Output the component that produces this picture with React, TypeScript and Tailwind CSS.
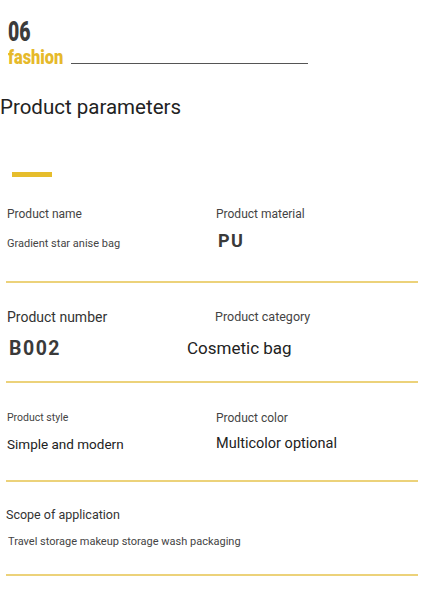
const font = { fontFamily: 'Roboto, "Noto Sans", sans-serif' };
const narrow = { fontFamily: 'Roboto, "DejaVu Sans", sans-serif' };

function Row({ className, children }: { className: string; children: React.ReactNode }) {
  return (
    <div className={`mx-[6px] border-b-2 border-[#ecd27a] ${className}`}>{children}</div>
  );
}

export default function App() {
  return (
    <div className="w-[424px] h-[600px] bg-white text-[#333] overflow-hidden" style={font}>
      <div className="pl-2 pt-[20px]">
        <div
          className="inline-block origin-left scale-x-[0.72] text-[27px] leading-[24px] font-black text-[#3b3b3b]"
          style={narrow}
        >
          06
        </div>
        <div className="mt-px flex items-end">
          <span
            className="inline-block w-[63px] origin-left scale-x-[0.82] text-[20px] leading-[17px] font-black text-[#e6b92a] whitespace-nowrap"
            style={narrow}
          >
            fashion
          </span>
          <div className="mb-[2px] h-px w-[237px] bg-[#555]" />
        </div>
      </div>

      <h1 className="mt-[29px] text-[20.5px] leading-[24px] font-normal text-[#222]">Product parameters</h1>

      <div className="ml-3 mt-[53px] h-[5px] w-10 bg-[#e6bd2c]" />

      <Row className="h-[106px] pt-[29px] grid grid-cols-[209px_1fr]">
        <div className="pl-px">
          <div className="text-[12px] leading-4 text-[#444]">Product name</div>
          <div className="mt-[14px] text-[11px] leading-4 text-[#444]">Gradient star anise bag</div>
        </div>
        <div className="pl-px">
          <div className="text-[12px] leading-4 text-[#444]">Product material</div>
          <div className="mt-[9px] pl-[2px] text-[18px] leading-5 font-bold tracking-[1.5px] text-[#3a3a3a]">PU</div>
        </div>
      </Row>

      <Row className="h-[100px] pt-[24px] grid grid-cols-[181px_1fr]">
        <div className="pl-px">
          <div className="text-[14px] leading-5 text-[#333]">Product number</div>
          <div className="mt-[10px] pl-[2px] text-[19.5px] leading-6 font-bold tracking-[1.5px] text-[#3a3a3a]">B002</div>
        </div>
        <div>
          <div className="pl-7 text-[12.5px] leading-5 text-[#444]">Product category</div>
          <div className="mt-[9px] text-[17px] leading-6 text-[#222]">Cosmetic bag</div>
        </div>
      </Row>

      <Row className="h-[99px] pt-[25px] grid grid-cols-[209px_1fr]">
        <div className="pl-px">
          <div className="text-[10.5px] leading-5 text-[#444]">Product style</div>
          <div className="mt-[6px] text-[13.5px] leading-5 text-[#222]">Simple and modern</div>
        </div>
        <div className="pl-px">
          <div className="text-[12px] leading-5 text-[#444]">Product color</div>
          <div className="mt-[6px] text-[14.5px] leading-5 text-[#222]">Multicolor optional</div>
        </div>
      </Row>

      <Row className="h-[94px] pt-[23px]">
        <div className="text-[12.5px] leading-5 text-[#333]">Scope of application</div>
        <div className="mt-[9px] pl-[2px] text-[11px] leading-4 text-[#444]">
          Travel storage makeup storage wash packaging
        </div>
      </Row>
    </div>
  );
}
